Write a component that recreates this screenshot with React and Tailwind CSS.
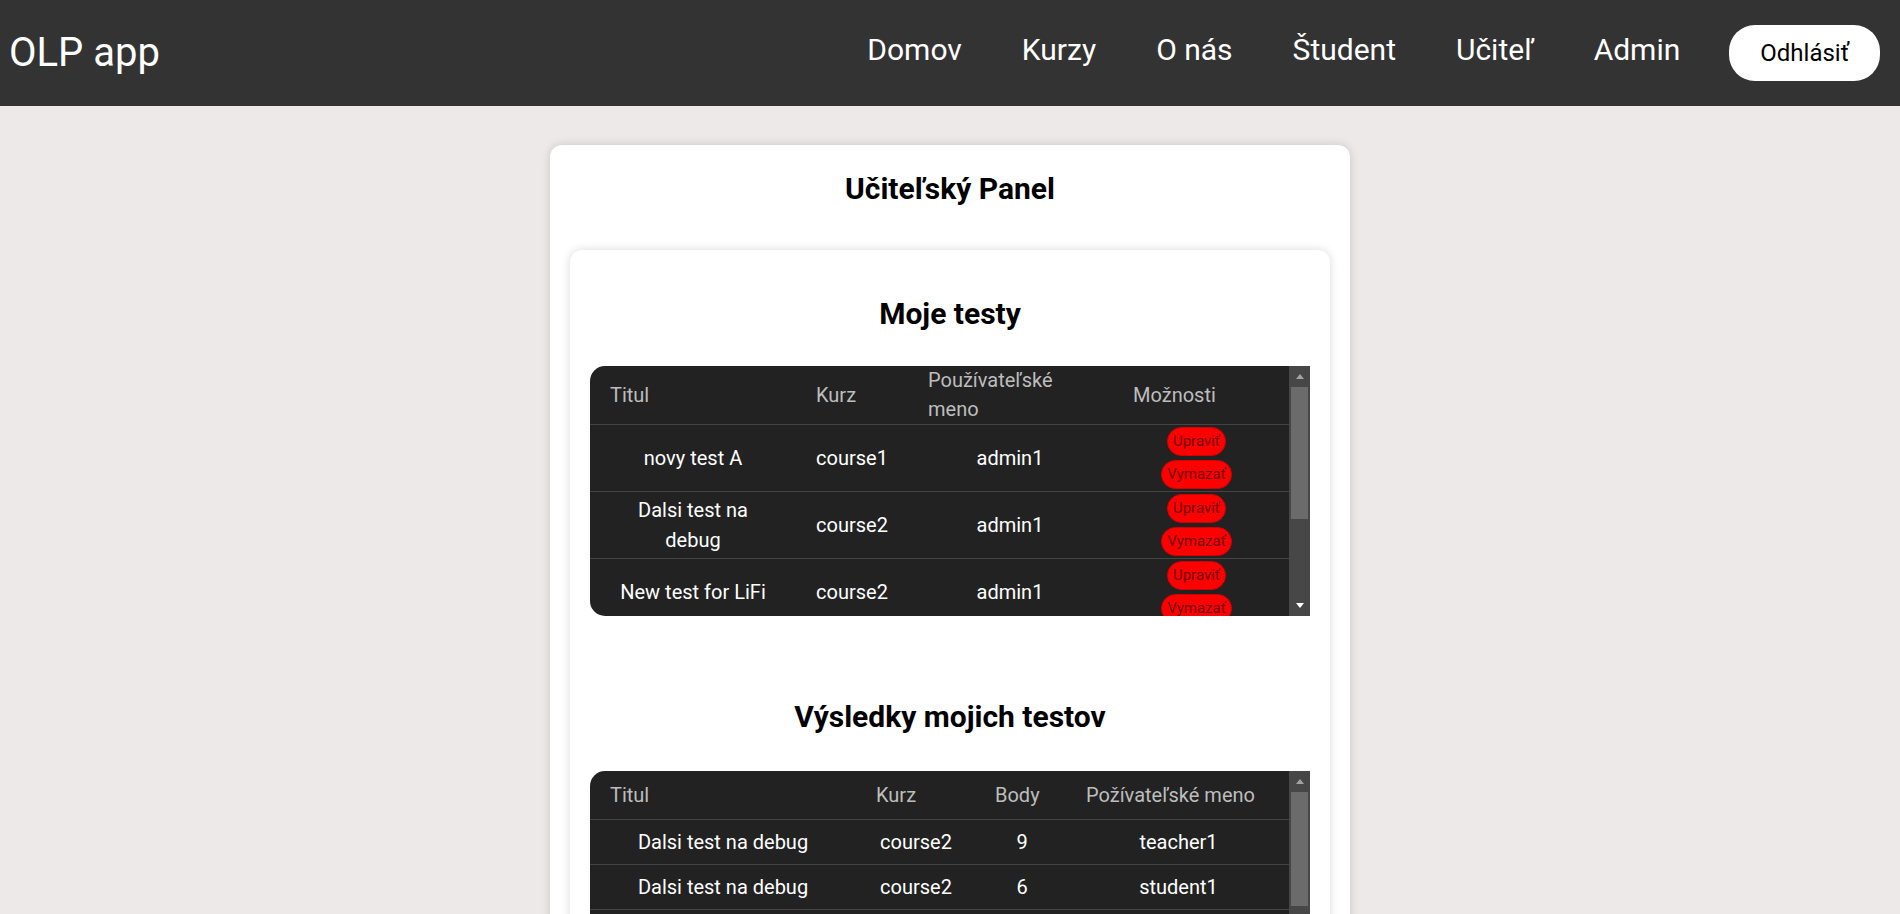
const myTests = [
  { title: "novy test A", course: "course1", user: "admin1" },
  { title: "Dalsi test na debug", course: "course2", user: "admin1" },
  { title: "New test for LiFi", course: "course2", user: "admin1" },
  { title: "test B", course: "course1", user: "admin1" },
  { title: "Kviz 3", course: "course3", user: "admin1" },
];

const results = [
  { title: "Dalsi test na debug", course: "course2", points: 9, user: "teacher1" },
  { title: "Dalsi test na debug", course: "course2", points: 6, user: "student1" },
  { title: "novy test A", course: "course1", points: 4, user: "student1" },
  { title: "New test for LiFi", course: "course2", points: 7, user: "student2" },
];

const navLinks = ["Domov", "Kurzy", "O nás", "Študent", "Učiteľ", "Admin"];

function Arrow({ up, dim }) {
  return (
    <svg width="8" height="5" viewBox="0 0 8 5" className={dim ? "fill-[#a3a3a3]" : "fill-white"}>
      {up ? <polygon points="0,5 8,5 4,0" /> : <polygon points="0,0 8,0 4,5" />}
    </svg>
  );
}

function Scrollbar({ thumbClass }) {
  return (
    <div className="flex w-[21px] shrink-0 flex-col bg-[#474747]">
      <div className="flex h-[21px] items-center justify-center">
        <Arrow up dim />
      </div>
      <div className={`mx-[2px] bg-[#6b6b6b] ${thumbClass}`} />
      <div className="flex-1" />
      <div className="flex h-[21px] items-center justify-center">
        <Arrow />
      </div>
    </div>
  );
}

function PillButton({ children }) {
  return (
    <button
      type="button"
      className="h-[29px] rounded-full border border-[#d40000] bg-[#ff0000] px-[5px] text-[15px] leading-[19px] text-[#6e0000]"
    >
      {children}
    </button>
  );
}

function MyTestsTable() {
  return (
    <div className="flex h-[250px] overflow-hidden rounded-l-[15px] bg-[#222222]">
      <div className="flex-1 overflow-hidden">
        <table className="w-full table-fixed border-collapse text-[20px]">
          <colgroup>
            <col className="w-[206px]" />
            <col className="w-[112px]" />
            <col className="w-[204px]" />
            <col className="w-[177px]" />
          </colgroup>
          <thead>
            <tr className="border-b border-[#444444] text-left leading-[29px] text-[#bdbdbd]">
              <th className="px-[20px] font-normal">Titul</th>
              <th className="px-[20px] font-normal">Kurz</th>
              <th className="px-[20px] font-normal">Používateľské meno</th>
              <th className="pl-[21px] font-normal">Možnosti</th>
            </tr>
          </thead>
          <tbody>
            {myTests.map((t, i) => (
              <tr key={i} className="border-b border-[#444444] text-center leading-[30px] text-white">
                <td className="px-[20px] py-[2px]">
                  <span className="inline-block max-w-[160px]">{t.title}</span>
                </td>
                <td className="py-[2px]">{t.course}</td>
                <td className="py-[2px]">{t.user}</td>
                <td className="py-[2px] pl-[20px] pr-[28px]">
                  <div className="flex flex-col items-center gap-[4px]">
                    <PillButton>Upraviť</PillButton>
                    <PillButton>Vymazať</PillButton>
                  </div>
                </td>
              </tr>
            ))}
          </tbody>
        </table>
      </div>
      <Scrollbar thumbClass="h-[132px]" />
    </div>
  );
}

function ResultsTable() {
  return (
    <div className="flex h-[250px] overflow-hidden rounded-l-[15px] bg-[#222222]">
      <div className="flex-1 overflow-hidden">
        <table className="w-full table-fixed border-collapse text-[20px]">
          <colgroup>
            <col className="w-[266px]" />
            <col className="w-[120px]" />
            <col className="w-[92px]" />
            <col className="w-[221px]" />
          </colgroup>
          <thead>
            <tr className="border-b border-[#444444] text-left leading-[30px] text-[#bdbdbd]">
              <th className="px-[20px] py-[9px] font-normal">Titul</th>
              <th className="px-[20px] py-[9px] font-normal">Kurz</th>
              <th className="pl-[19px] py-[9px] font-normal">Body</th>
              <th className="pl-[18px] py-[9px] font-normal">Požívateľské meno</th>
            </tr>
          </thead>
          <tbody>
            {results.map((r, i) => (
              <tr key={i} className="border-b border-[#444444] text-center leading-[30px] text-white">
                <td className="py-[7px]">{r.title}</td>
                <td className="py-[7px]">{r.course}</td>
                <td className="py-[7px]">{r.points}</td>
                <td className="py-[7px]">{r.user}</td>
              </tr>
            ))}
          </tbody>
        </table>
      </div>
      <Scrollbar thumbClass="h-[114px]" />
    </div>
  );
}

export default function App() {
  return (
    <div className="min-h-screen bg-[#ede9e8] font-['Roboto',sans-serif] text-black">
      <header className="flex h-[106px] items-center justify-between bg-[#333333] pl-[9px] pr-[20px]">
        <div className="text-[40px] text-white">OLP app</div>
        <div className="flex items-center gap-[49px]">
          <nav className="flex items-center gap-[60px] pb-[7px] text-[30px] text-white">
            {navLinks.map((l) => (
              <a key={l} href="#">
                {l}
              </a>
            ))}
          </nav>
          <button
            type="button"
            className="h-[56px] rounded-[26px] bg-white px-[31px] text-[24px] text-black"
          >
            Odhlásiť
          </button>
        </div>
      </header>

      <main className="pt-[39px]">
        <div className="mx-auto w-[800px] rounded-[12px] bg-white px-[20px] pt-[21px] pb-[20px] shadow-[0_0_10px_rgba(0,0,0,0.15)]">
          <h1 className="text-center text-[30px] font-bold leading-[45px]">Učiteľský Panel</h1>
          <div className="mt-[39px] rounded-[12px] bg-white px-[20px] pt-[41px] pb-[30px] shadow-[0_0_10px_rgba(0,0,0,0.15)]">
            <h2 className="mb-[30px] text-center text-[30px] font-bold leading-[45px]">Moje testy</h2>
            <MyTestsTable />
            <h2 className="mt-[78px] mb-[32px] text-center text-[30px] font-bold leading-[45px]">
              Výsledky mojich testov
            </h2>
            <ResultsTable />
          </div>
        </div>
      </main>
    </div>
  );
}
